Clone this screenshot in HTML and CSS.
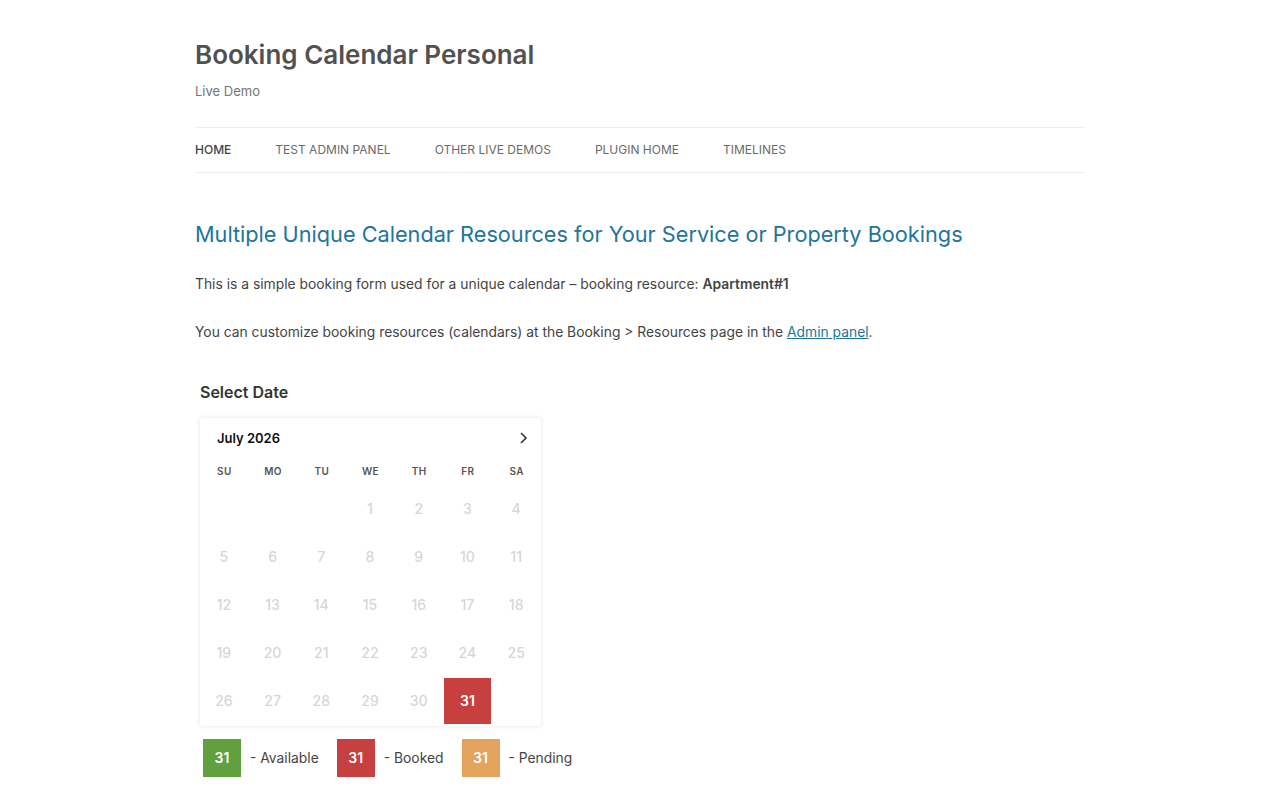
FILE: index.html
```html
<!DOCTYPE html>
<html lang="en">
<head>
<meta charset="utf-8">
<title>Booking Calendar Personal</title>
<link rel="stylesheet" href="styles.css">
</head>
<body>
<div class="site">
  <header class="site-header">
    <h1 class="site-title">Booking Calendar Personal</h1>
    <p class="site-desc">Live Demo</p>
    <nav class="main-nav">
      <a class="current" href="#">Home</a>
      <a href="#">Test Admin Panel</a>
      <a href="#">Other Live Demos</a>
      <a href="#">Plugin Home</a>
      <a href="#">Timelines</a>
    </nav>
  </header>
  <main class="content">
    <h2 class="entry-title">Multiple Unique Calendar Resources for Your Service or Property Bookings</h2>
    <p>This is a simple booking form used for a unique calendar – booking resource: <strong>Apartment#1</strong></p>
    <p>You can customize booking resources (calendars) at the Booking &gt; Resources page in the <a href="#">Admin panel</a>.</p>
    <div class="booking-form">
      <div class="form-label">Select Date</div>
      <div class="calendar">
        <div class="cal-head">
          <span class="cal-month">July 2026</span>
          <svg class="cal-next" width="10" height="14" viewBox="0 0 10 14"><path d="M3 2 L8 7 L3 12" fill="none" stroke="#333" stroke-width="1.6"/></svg>
        </div>
        <div class="cal-grid">
          <div class="dn">Su</div><div class="dn">Mo</div><div class="dn">Tu</div><div class="dn">We</div><div class="dn">Th</div><div class="dn">Fr</div><div class="dn">Sa</div>
          <div class="d"></div><div class="d"></div><div class="d"></div><div class="d">1</div><div class="d">2</div><div class="d">3</div><div class="d">4</div>
          <div class="d">5</div><div class="d">6</div><div class="d">7</div><div class="d">8</div><div class="d">9</div><div class="d">10</div><div class="d">11</div>
          <div class="d">12</div><div class="d">13</div><div class="d">14</div><div class="d">15</div><div class="d">16</div><div class="d">17</div><div class="d">18</div>
          <div class="d">19</div><div class="d">20</div><div class="d">21</div><div class="d">22</div><div class="d">23</div><div class="d">24</div><div class="d">25</div>
          <div class="d">26</div><div class="d">27</div><div class="d">28</div><div class="d">29</div><div class="d">30</div><div class="d"><span class="booked">31</span></div><div class="d"></div>
        </div>
      </div>
      <div class="legend">
        <span class="lg-box available">31</span><span class="lg-text">- Available</span>
        <span class="lg-box booked-c">31</span><span class="lg-text">- Booked</span>
        <span class="lg-box pending">31</span><span class="lg-text">- Pending</span>
      </div>
    </div>
  </main>
</div>
</body>
</html>
```
FILE: styles.css
```css
html, body {
  margin: 0;
  padding: 0;
  background: #fff;
}
body {
  font-family: Inter, "Noto Sans", "Liberation Sans", sans-serif;
  color: #444;
  font-size: 13.85px;
  line-height: 24px;
}
.site {
  width: 890px;
  margin: 0 auto;
}
.site-header {
  padding-top: 37px;
}
.site-title {
  margin: 0;
  font-size: 26px;
  line-height: 36px;
  font-weight: 600;
  color: #515151;
}
.site-desc {
  margin: 8px 0 0;
  font-size: 13px;
  line-height: 20px;
  color: #757575;
}
.main-nav {
  margin-top: 26px;
  border-top: 1px solid #ededed;
  border-bottom: 1px solid #ededed;
  height: 44px;
  display: flex;
  align-items: center;
  gap: 44px;
}
.main-nav a {
  font-size: 12px;
  text-transform: uppercase;
  color: #6a6a6a;
  text-decoration: none;
  line-height: 20px;
}
.main-nav a.current {
  color: #444;
  font-weight: 500;
}
.content {
  padding-top: 45px;
}
.entry-title {
  margin: 0 0 22px;
  font-size: 21.7px;
  line-height: 32px;
  font-weight: 400;
  color: #21759b;
}
.content p {
  margin: 0 0 24px;
}
.content p strong {
  font-weight: 600;
}
.content a {
  color: #21759b;
}
.booking-form {
  padding-left: 5px;
  padding-top: 12px;
}
.form-label {
  font-size: 16px;
  font-weight: 600;
  color: #333;
  line-height: 24px;
}
.calendar {
  margin-top: 14px;
  width: 341px;
  background: #fff;
  border-radius: 3px;
  box-shadow: 0 0 4px rgba(0,0,0,0.12);
  padding-bottom: 2px;
}
.cal-head {
  height: 39px;
  display: flex;
  align-items: center;
  justify-content: space-between;
  padding: 0 13px 0 17px;
}
.cal-month {
  font-size: 13px;
  font-weight: 600;
  color: #111;
}
.cal-grid {
  display: grid;
  grid-template-columns: repeat(7, 1fr);
  grid-auto-rows: 48px;
  grid-template-rows: 27px;
}
.dn {
  display: flex;
  align-items: center;
  justify-content: center;
  font-size: 10px;
  font-weight: 600;
  text-transform: uppercase;
  color: #555;
  letter-spacing: 0.4px;
}
.d {
  display: flex;
  align-items: center;
  justify-content: center;
  font-size: 14px;
  font-weight: 500;
  color: #d6d6d6;
  padding: 2px 1px 0 0;
}
.d .booked {
  display: flex;
  align-items: center;
  justify-content: center;
  width: 100%;
  height: 100%;
  background: #c83f3f;
  color: #fff;
  font-weight: 600;
}
.legend {
  display: flex;
  align-items: center;
  margin-top: 13px;
  padding-left: 3px;
}
.lg-box {
  width: 38px;
  height: 38px;
  display: flex;
  align-items: center;
  justify-content: center;
  color: #fff;
  font-weight: 600;
  font-size: 14px;
}
.lg-text {
  margin-left: 9px;
  margin-right: 18px;
  color: #444;
  font-size: 13.85px;
}
.available { background: #619f3f; }
.booked-c { background: #c83f3f; }
.pending { background: #e4a35c; }
```
